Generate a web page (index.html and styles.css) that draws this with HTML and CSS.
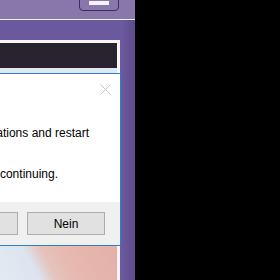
FILE: index.html
```html
<!DOCTYPE html>
<html>
<head>
<meta charset="utf-8">
<link rel="stylesheet" href="styles.css">
</head>
<body>
<div class="screen">
  <div class="topbar">
    <div class="tool-btn"><span class="tool-bar"></span></div>
  </div>
  <div class="content">
    <div class="card">
      <div class="card-dark"></div>
      <div class="card-photo"></div>
    </div>
    <div class="dialog">
      <div class="dialog-body">
        <div class="titlebar">
          <svg class="close" width="11" height="11" viewBox="0 0 11 11"><path d="M0.5 0.5 L10.5 10.5 M10.5 0.5 L0.5 10.5" stroke="#c4c4c4" stroke-width="1" fill="none"/></svg>
        </div>
        <p class="msg"><span>Setup must close all applications and restart</span></p>
        <p class="msg msg2"><span>Please save your work before continuing.</span></p>
      </div>
      <div class="dialog-buttons">
        <button class="btn">Ja</button>
        <button class="btn">Nein</button>
      </div>
    </div>
  </div>
</div>
</body>
</html>
```

FILE: styles.css
```css
html, body {
  margin: 0;
  padding: 0;
  background: #000;
  width: 280px;
  height: 280px;
  overflow: hidden;
}

.screen {
  width: 135px;
  height: 280px;
  background: #6a599c;
  display: flex;
  flex-direction: column;
  overflow: hidden;
}

.topbar {
  height: 19px;
  flex: none;
  background: #8777ab;
  border-bottom: 1px solid #f2eef8;
  display: flex;
  justify-content: flex-end;
  padding-right: 16px;
}

.tool-btn {
  width: 40px;
  height: 20px;
  margin-top: -9px;
  border: 1px solid #3a2f58;
  border-radius: 4px;
  display: flex;
  justify-content: center;
  align-items: flex-start;
  padding-top: 8px;
  box-sizing: border-box;
}

.tool-bar {
  display: block;
  width: 20px;
  height: 4px;
  margin-top: 1px;
  background: #f4f1f8;
}

.content {
  position: relative;
  flex: 1;
  padding-top: 20px;
  background: linear-gradient(to right, #6a599c 0, #6a599c 122px, #5e4b8e 135px);
}

.card {
  width: 117px;
  height: 240px;
  border: 3px solid #f7f6fa;
  border-left: none;
  border-bottom: none;
  display: flex;
  flex-direction: column;
}

.card-dark {
  height: 25px;
  background: #28232f;
  flex: none;
}

.card-photo {
  flex: 1;
  background-color: #dfe8f2;
  background-image: linear-gradient(62deg, #e2eaf4 0, #dce5ef 30%, #e4c4bd 42%, #e7b9b0 58%, #e3b0a8 100%);
  background-size: 117px 40px;
  background-position: left bottom;
  background-repeat: no-repeat;
}

.dialog {
  position: absolute;
  left: -220px;
  top: 53px;
  width: 341px;
  height: 173px;
  background: #fff;
  border: 1px solid #2a7fc6;
  box-sizing: border-box;
  display: flex;
  flex-direction: column;
  font-family: "Liberation Sans", Arial, sans-serif;
  font-size: 12px;
  color: #000;
}

.dialog-body {
  flex: 1;
}

.titlebar {
  height: 30px;
  display: flex;
  justify-content: flex-end;
  align-items: center;
  padding-right: 9px;
}

.close {
  display: block;
}

.msg {
  margin: 21px 0 0 0;
  display: flex;
  justify-content: flex-end;
  padding-right: 31px;
  line-height: 16px;
  white-space: nowrap;
}

.msg2 {
  margin-top: 25px;
  padding-right: 62px;
}

.dialog-buttons {
  height: 43px;
  flex: none;
  background: #f0f0f0;
  display: flex;
  justify-content: flex-end;
  align-items: center;
  gap: 9px;
  padding-right: 15px;
}

.btn {
  width: 78px;
  height: 23px;
  background: #e1e1e1;
  border: 1px solid #adadad;
  font-family: "Liberation Sans", Arial, sans-serif;
  font-size: 12px;
  color: #000;
  padding: 0;
}
```
